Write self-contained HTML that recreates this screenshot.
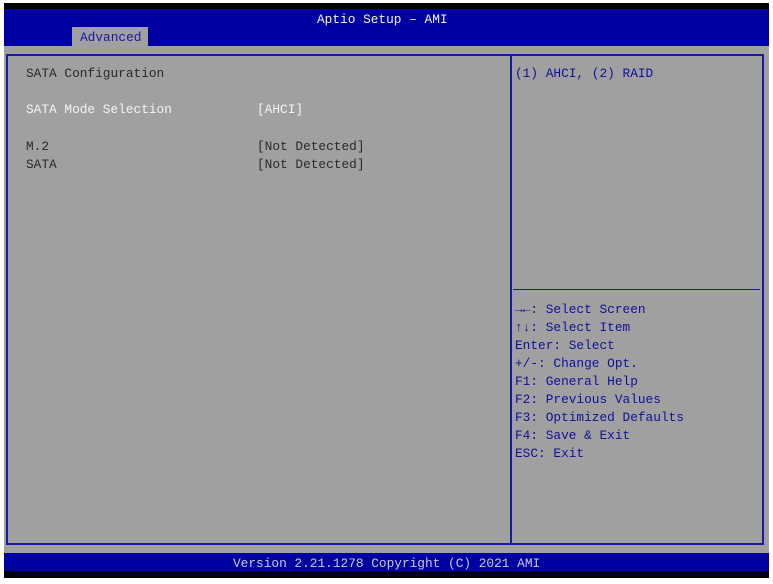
<!DOCTYPE html>
<html><head><meta charset="utf-8"><style>
*{margin:0;padding:0;box-sizing:border-box}
body{width:773px;height:584px;background:#fff;position:relative;overflow:hidden;font-family:"Liberation Mono",monospace;font-size:12.8px;line-height:18px}
.a{position:absolute;white-space:pre}
#blk1{left:4px;top:3px;width:765px;height:6px;background:#000}
#hdr{left:4px;top:9px;width:765px;height:37px;background:#0000a2}
#gray{left:4px;top:46px;width:765px;height:507px;background:#a0a0a0}
#ftr{left:4px;top:553px;width:765px;height:18px;background:#0000a2}
#blk2{left:4px;top:571px;width:765px;height:7px;background:#000}
.ln{position:absolute;background:#1a1aa0}
.w{color:#f4f4f4}.d{color:#2a2a2a}.b{color:#10109a}
</style></head><body>
<div class="a" id="blk1"></div>
<div class="a" id="hdr"></div>
<div class="a" id="gray"></div>
<div class="a" id="ftr"></div>
<div class="a" id="blk2"></div>
<div class="a w" style="left:317px;top:11px">Aptio Setup – AMI</div>
<div class="a" style="left:72px;top:27px;width:76px;height:19px;background:#a0a0a0"></div>
<div class="a b" style="left:80px;top:29px;color:#1818a8">Advanced</div>
<div class="ln" style="left:6px;top:54px;width:758px;height:2px"></div>
<div class="ln" style="left:6px;top:543px;width:758px;height:2px"></div>
<div class="ln" style="left:6px;top:54px;width:2px;height:491px"></div>
<div class="ln" style="left:762px;top:54px;width:2px;height:491px"></div>
<div class="ln" style="left:510px;top:54px;width:2px;height:491px"></div>
<div class="ln" style="left:513px;top:289px;width:247px;height:1px"></div>
<div class="a d" style="left:26px;top:65px">SATA Configuration</div>
<div class="a w" style="left:26px;top:101px">SATA Mode Selection</div>
<div class="a w" style="left:257px;top:101px">[AHCI]</div>
<div class="a d" style="left:26px;top:138px">M.2
SATA</div>
<div class="a d" style="left:257px;top:138px">[Not Detected]
[Not Detected]</div>
<div class="a b" style="left:515px;top:65px">(1) AHCI, (2) RAID</div>
<div class="a b" style="left:515px;top:301px">→←: Select Screen
↑↓: Select Item
Enter: Select
+/-: Change Opt.
F1: General Help
F2: Previous Values
F3: Optimized Defaults
F4: Save &amp; Exit
ESC: Exit</div>
<div class="a" style="left:233px;top:555px;color:#c8c8e0">Version 2.21.1278 Copyright (C) 2021 AMI</div>
</body></html>
